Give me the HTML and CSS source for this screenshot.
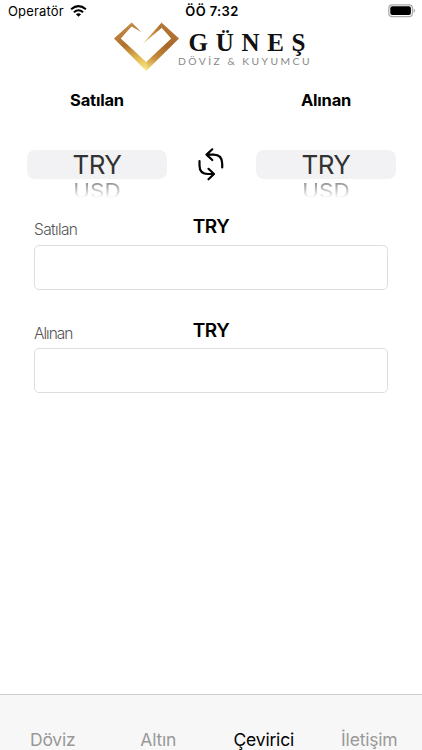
FILE: index.html
```
<!DOCTYPE html>
<html lang="tr">
<head>
<meta charset="utf-8">
<title>Güneş Döviz &amp; Kuyumcu</title>
<link rel="stylesheet" href="styles.css">
</head>
<body>
<header class="status">
  <div class="carrier"><span class="operator">Operatör</span>
    <svg width="17" height="12" viewBox="0 0 17 12"><g fill="none" stroke="#000" stroke-width="2.1"><path d="M1.1 4.3Q8.5-2 15.9 4.3"/><path d="M3.9 7.2Q8.5 3.3 13.1 7.2"/></g><path d="M5.9 9.2Q8.5 7.1 11.1 9.2L8.5 11.8Z"/></svg>
  </div>
  <span class="time">ÖÖ 7:32</span>
  <svg class="battery" width="28" height="14" viewBox="0 0 28 14"><rect x=".8" y=".8" width="23.6" height="11.8" rx="3.4" fill="none" stroke="#aaa" stroke-width="1.2"/><rect x="2.3" y="2.3" width="20.6" height="8.8" rx="2"/><path d="M25.6 4.6q1.5 .5 1.5 2.1t-1.5 2.1z" fill="#aaa"/></svg>
</header>
<div class="logo">
  <svg width="66" height="50" viewBox="114 22 66 50">
    <defs>
      <linearGradient id="left" gradientUnits="userSpaceOnUse" x1="133" y1="23" x2="146" y2="70"><stop offset="0" stop-color="#c18a45"/><stop offset=".4" stop-color="#b0712d"/><stop offset=".7" stop-color="#dfb64f"/><stop offset="1" stop-color="#faea86"/></linearGradient>
      <linearGradient id="right" gradientUnits="userSpaceOnUse" x1="146" y1="70" x2="165" y2="24"><stop offset="0" stop-color="#f7e57d"/><stop offset=".3" stop-color="#c58c3b"/><stop offset=".6" stop-color="#a8662a"/><stop offset="1" stop-color="#b57735"/></linearGradient>
      <linearGradient id="arm" x1="0" y1="1" x2="1" y2="0"><stop offset="0" stop-color="#eed07c"/><stop offset=".5" stop-color="#c99145"/><stop offset="1" stop-color="#a8662a"/></linearGradient>
    </defs>
    <path d="M141.3 32L131.7 22.5L114 38.4L146.2 71V62L120.8 38.4L131.5 26.6Z" fill="url(#left)"/>
    <path d="M146.2 71L179 38.4L161.4 22.5V27.5L171.2 38.6L146.2 62Z" fill="url(#right)"/>
    <path d="M161.7 22.5L142.5 44L161.7 28Z" fill="url(#arm)"/>
  </svg>
  <svg class="brand" width="136" height="50" viewBox="176 22 136 50">
    <text class="name" x="188.5" y="50.7" textLength="117">GÜNEŞ</text>
    <text class="tagline" x="178" y="65.3" textLength="131.5">DÖVİZ &amp; KUYUMCU</text>
  </svg>
</div>
<main>
  <section class="pickers">
    <div class="picker"><h2>Satılan</h2><div class="selected"><span>TRY</span></div><div class="next"><span>USD</span></div></div>
    <svg class="swap" width="30" height="36" viewBox="197 146 30 36" fill="none" stroke="#000" stroke-width="2.2" stroke-linecap="round" stroke-linejoin="round"><path d="M212.3 149.3L206.5 154.6L212.3 160M207 154.6H213.5Q222.2 154.8 222.2 163.5V167.5M199.5 161V165.5Q199.5 174 208 174H213.5M208.5 168.8L214 174L208.5 179.3"/></svg>
    <div class="picker"><h2>Alınan</h2><div class="selected"><span>TRY</span></div><div class="next"><span>USD</span></div></div>
  </section>
  <section class="field"><div class="caption"><label for="sold">Satılan</label><strong>TRY</strong></div><input id="sold" type="text"></section>
  <section class="field"><div class="caption"><label class="narrow" for="bought">Alınan</label><strong>TRY</strong></div><input id="bought" type="text"></section>
</main>
<nav><a>Döviz</a><a>Altın</a><a class="active">Çevirici</a><a>İletişim</a></nav>
</body>
</html>
```
FILE: styles.css
```
* { box-sizing: border-box; }
body {
  margin: 0; width: 422px; height: 750px; overflow: hidden;
  display: flex; flex-direction: column; background: #fff; color: #000;
  font-family: Inter, "Liberation Sans", sans-serif;
}
.status {
  height: 22px; padding: 0 6px 0 8px; flex: none;
  display: grid; grid-template-columns: 1fr auto 1fr; align-items: center;
  font-size: 13px; line-height: 22px;
}
.carrier { display: flex; align-items: center; gap: 6px; }
.operator { letter-spacing: .15px; }
.time { font-weight: 600; letter-spacing: .35px; }
.battery { justify-self: end; }
.logo { height: 50px; flex: none; display: flex; padding-left: 114px; }
.brand { margin-left: -4px; }
.name { font: 700 25px "Liberation Serif", serif; fill: #111; }
.tagline { font: 400 10.3px Lato, sans-serif; fill: #888; }
main { flex: 1; }
.pickers { display: flex; height: 128px; padding: 0 26px 0 27px; justify-content: space-between; }
.picker { width: 140px; text-align: center; }
h2 { margin: 17px 0 0; height: 61px; font-size: 16.5px; font-weight: 700; line-height: 22px; letter-spacing: -.2px; }
.selected { height: 29px; border-radius: 8px; background: #f2f2f4; color: #333; font-size: 26px; line-height: 30px; letter-spacing: -.5px; }
.next {
  height: 21px; color: #777; font-size: 22.5px; line-height: 23px;
  -webkit-mask-image: linear-gradient(#000, transparent 90%); mask-image: linear-gradient(#000, transparent 90%);
}
.next span { display: inline-block; transform: scaleY(.88); }
.swap { margin-top: 74px; }
.field { margin: 14px 34px 0; height: 89.5px; }
.caption { display: grid; grid-template-columns: 1fr auto 1fr; height: 30.6px; }
label { color: #555; font-size: 15.5px; font-weight: 300; line-height: 32.6px; letter-spacing: -.65px; }
.narrow { letter-spacing: -1px; }
strong { font-size: 19px; font-weight: 600; line-height: 26px; letter-spacing: -.5px; }
input { display: block; width: 100%; height: 45.4px; border: 1px solid #dedede; border-radius: 5px; background: #fff; }
nav { height: 56px; flex: none; display: grid; grid-template-columns: repeat(4, 1fr); padding-top: 32px; border-top: 1px solid #ccc; background: #f7f7f7; text-align: center; font-size: 17.5px; line-height: 25px; color: #999; letter-spacing: -.2px; }
.active { color: #000; }
```
